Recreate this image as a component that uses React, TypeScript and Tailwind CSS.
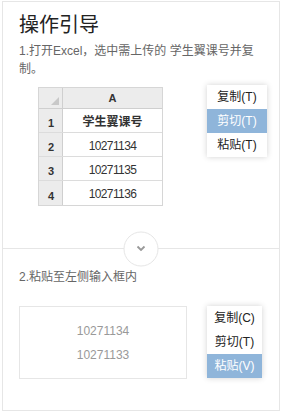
import React from 'react';

const font = { fontFamily: '"Liberation Sans", "Noto Sans CJK SC", sans-serif' };

interface MenuProps {
  items: string[];
  active: number;
  width: string;
}

function ContextMenu({ items, active, width }: MenuProps) {
  return (
    <div className={`${width} bg-white shadow-[0_0_6px_rgba(0,0,0,0.18)]`}>
      {items.map((item, idx) => (
        <div
          key={idx}
          className={`h-6 flex items-center justify-center text-[12px] ${
            idx === active ? 'bg-[#8fb5da] text-white' : 'text-[#222]'
          }`}
        >
          {item}
        </div>
      ))}
    </div>
  );
}

function ExcelTable() {
  const rows = ['学生翼课号', '10271134', '10271135', '10271136'];
  return (
    <div className="w-[125px] border border-[#d6d6d6] text-[#333]">
      {/* Header */}
      <div className="flex h-[21px] bg-[#ececec] border-b border-[#cfcfcf]">
        <div className="relative w-[24px] border-r border-[#cfcfcf]">
          <div className="absolute right-[3px] bottom-[3px] w-0 h-0 border-l-[8px] border-l-transparent border-b-[8px] border-b-[#c8c8c8]" />
        </div>
        <div className="flex-1 flex items-center justify-center text-[11px] font-semibold">A</div>
      </div>
      {/* Rows */}
      {rows.map((row, idx) => (
        <div key={idx} className={`flex h-6 ${idx < 3 ? 'border-b border-[#dcdcdc]' : ''}`}>
          <div className="w-[24px] bg-[#ececec] border-r border-[#cfcfcf] flex items-end pl-[9px] pb-[1px] text-[11px] font-semibold">
            {idx + 1}
          </div>
          <div
            className={`flex-1 flex items-center justify-center pt-[2px] ${
              idx === 0 ? 'text-[12px] font-semibold' : 'text-[12px] tracking-[-0.6px]'
            }`}
          >
            {row}
          </div>
        </div>
      ))}
    </div>
  );
}

export default function App() {
  return (
    <div className="bg-white w-[282px] h-[415px] pt-[1px] pl-[2px]" style={font}>
      <div className="w-[278px] h-[410px] border border-[#e6e6e6] bg-white">
        {/* Step 1 */}
        <div className="px-4 pt-[9px] pb-[42px]">
          <h2 className="text-[20px] leading-[28px] text-[#222]">操作引导</h2>
          <p className="mt-[3px] text-[12px] leading-[18px] text-[#666]">
            1.打开Excel，选中需上传的 学生翼课号并复制。
          </p>
          <div className="mt-[9px] flex items-start">
            <div className="ml-[19px]">
              <ExcelTable />
            </div>
            <div className="ml-[44px] -mt-[2px]">
              <ContextMenu items={['复制(T)', '剪切(T)', '粘贴(T)']} active={1} width="w-[60px]" />
            </div>
          </div>
        </div>

        {/* Divider */}
        <div className="relative h-px bg-[#e6e6e6]">
          <div className="absolute left-1/2 top-1/2 -translate-x-1/2 -translate-y-1/2 w-[35px] h-[35px] rounded-full border border-[#e6e6e6] bg-white flex items-center justify-center">
            <svg width="9" height="6" viewBox="0 0 9 6" fill="none">
              <path d="M1 1l3.5 3.5L8 1" stroke="#999" strokeWidth="1.8" />
            </svg>
          </div>
        </div>

        {/* Step 2 */}
        <div className="px-4 pt-[19px]">
          <p className="text-[12px] leading-[18px] text-[#666]">2.粘贴至左侧输入框内</p>
          <div className="mt-[20px] flex items-start">
            <div className="w-[168px] h-[73px] border border-[#e6e6e6] flex flex-col items-center justify-center text-[12px] leading-6 text-[#999]">
              <div>10271134</div>
              <div>10271133</div>
            </div>
            <div className="ml-[20px]">
              <ContextMenu items={['复制(C)', '剪切(T)', '粘贴(V)']} active={2} width="w-[55px]" />
            </div>
          </div>
        </div>
      </div>
    </div>
  );
}
